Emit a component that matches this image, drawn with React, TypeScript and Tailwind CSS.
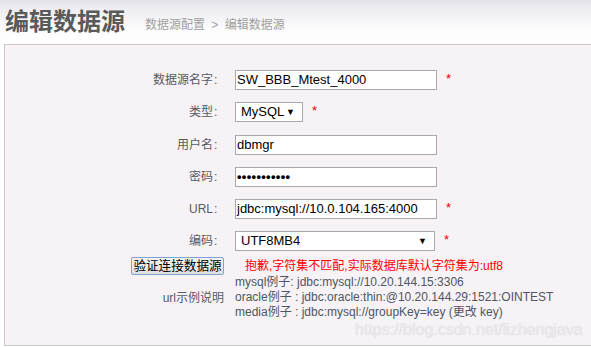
import React from "react";

function Label({ text }: { text: string }) {
  return (
    <div className="flex items-center justify-end text-[12px] leading-[20px] text-[#555b66]">
      <span>{text}</span>
      <span className="w-[12px] pl-[1px]">:</span>
    </div>
  );
}

function Star({ className = "" }: { className?: string }) {
  return <span className={"-mt-[3px] text-[13px] leading-[20px] text-[#ee0000] " + className}>*</span>;
}

function TextBox({ value, password = false }: { value: string; password?: boolean }) {
  return (
    <div className="flex h-[20px] w-[202px] items-center border border-[#a9a9a9] bg-white pl-[1px] text-[13px] leading-[18px] text-black">
      {password ? <span className="font-bold tracking-[0.3px]">•••••••••••</span> : <span>{value}</span>}
    </div>
  );
}

function SelectBox({ value, width }: { value: string; width: string }) {
  return (
    <div className={"flex h-[20px] items-center justify-between border border-[#a9a9a9] bg-white pl-[5px] pr-[7px] text-[13px] leading-[18px] text-black " + width}>
      <span>{value}</span>
      <span className="text-[9px] leading-[9px]">▼</span>
    </div>
  );
}

export default function App() {
  return (
    <div className="relative h-[347px] w-[591px] overflow-hidden bg-white font-['Liberation_Sans','Noto_Sans_CJK_SC',sans-serif]">
      <div className="flex h-[44px] items-end bg-[linear-gradient(to_bottom,#e2e3e8_0%,#ededf2_20%,#f5f5f7_45%,#fcfcfd_65%,#ffffff_100%)] pb-[8px] pl-[5px]">
        <div className="text-[24px] font-bold leading-[28px] text-[#5a5a5a]">编辑数据源</div>
        <div className="mb-[3px] ml-[20px] text-[12px] leading-[16px] text-[#a0a0a0]">
          数据源配置 <span className="mx-[3px]">&gt;</span> 编辑数据源
        </div>
      </div>
      <div className="ml-[4px] h-[302px] border-b border-l border-t border-[#c9c9c9] bg-[#f6f2f5] pt-[25px]">
        <div className="grid grid-cols-[220px_1fr] gap-x-[10px]">
          <Label text="数据源名字" />
          <div className="flex items-center gap-[9px]">
            <TextBox value="SW_BBB_Mtest_4000" />
            <Star />
          </div>

          <div className="col-span-2 h-[12px]" />
          <Label text="类型" />
          <div className="flex items-center gap-[9px]">
            <SelectBox value="MySQL" width="w-[68px]" />
            <Star />
          </div>

          <div className="col-span-2 h-[13px]" />
          <Label text="用户名" />
          <div className="flex items-center">
            <TextBox value="dbmgr" />
          </div>

          <div className="col-span-2 h-[12px]" />
          <Label text="密码" />
          <div className="flex items-center">
            <TextBox value="" password />
          </div>

          <div className="col-span-2 h-[12px]" />
          <div className="flex items-center justify-end text-[12px] leading-[20px] text-[#555b66]">
            <span>URL</span>
            <span className="w-[12px] pl-[1px]">:</span>
          </div>
          <div className="flex items-center gap-[9px]">
            <TextBox value="jdbc:mysql://10.0.104.165:4000" />
            <Star />
          </div>

          <div className="col-span-2 h-[12px]" />
          <Label text="编码" />
          <div className="flex items-center gap-[9px]">
            <SelectBox value="UTF8MB4" width="w-[200px]" />
            <Star />
          </div>

          <div className="col-span-2 h-[6px]" />
          <div className="flex justify-end pr-[1px]">
            <button className="flex h-[18px] w-[93px] items-center justify-center whitespace-nowrap rounded-[2px] border border-[#7da2d4] bg-[linear-gradient(to_bottom,#f4f4f4,#e0e0e0)] px-0 text-[12.6px] leading-[16px] text-black">
              验证连接数据源
            </button>
          </div>
          <div className="flex items-center pl-[10px] text-[12px] leading-[18px] text-[#ff0000]">
            抱歉,字符集不匹配,实际数据库默认字符集为:utf8
          </div>

          <div className="flex items-center justify-end pr-[1px] text-[12px] text-[#555b66]">url示例说明</div>
          <div className="text-[12px] leading-[15px] text-[#4f5664]">
            <div>mysql例子: jdbc:mysql://10.20.144.15:3306</div>
            <div>oracle例子 : jdbc:oracle:thin:@10.20.144.29:1521:OINTEST</div>
            <div>media例子 : jdbc:mysql://groupKey=key (更改 key)</div>
          </div>
        </div>
      </div>
      <div className="absolute left-[355px] top-[320px] text-[16px] leading-[20px] text-[#ebe7eb] [text-shadow:0_0_1px_#d8d4d8]">
        https://blog.csdn.net/lizhengjava
      </div>
    </div>
  );
}
